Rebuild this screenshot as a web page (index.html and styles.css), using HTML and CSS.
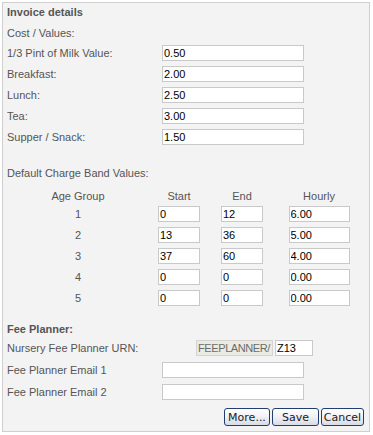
FILE: index.html
```html
<!DOCTYPE html>
<html>
<head>
    <title>Invoice details</title>
    <meta name="viewport" content="width=device-width, initial-scale=1.0">
    <link rel="stylesheet" href="styles.css">
</head>
<body>
    <div class="invoice-panel">
        <div class="invoice-title">Invoice details</div>
        <div class="invoice-section">Cost / Values:</div>

        <div class="invoice-row">
            <label>1/3 Pint of Milk Value:</label>
            <input type="text" class="invoice-input" value="0.50">
        </div>
        <div class="invoice-row">
            <label>Breakfast:</label>
            <input type="text" class="invoice-input" value="2.00">
        </div>
        <div class="invoice-row">
            <label>Lunch:</label>
            <input type="text" class="invoice-input" value="2.50">
        </div>
        <div class="invoice-row">
            <label>Tea:</label>
            <input type="text" class="invoice-input" value="3.00">
        </div>
        <div class="invoice-row">
            <label>Supper / Snack:</label>
            <input type="text" class="invoice-input" value="1.50">
        </div>

        <div class="invoice-section band-title">Default Charge Band Values:</div>

        <div class="band-grid band-head">
            <div>Age Group</div>
            <div>Start</div>
            <div>End</div>
            <div>Hourly</div>
        </div>
        <div class="band-grid band-row">
            <div>1</div>
            <input type="text" class="band-input" value="0">
            <input type="text" class="band-input" value="12">
            <input type="text" class="band-input hourly" value="6.00">
        </div>
        <div class="band-grid band-row">
            <div>2</div>
            <input type="text" class="band-input" value="13">
            <input type="text" class="band-input" value="36">
            <input type="text" class="band-input hourly" value="5.00">
        </div>
        <div class="band-grid band-row">
            <div>3</div>
            <input type="text" class="band-input" value="37">
            <input type="text" class="band-input" value="60">
            <input type="text" class="band-input hourly" value="4.00">
        </div>
        <div class="band-grid band-row">
            <div>4</div>
            <input type="text" class="band-input" value="0">
            <input type="text" class="band-input" value="0">
            <input type="text" class="band-input hourly" value="0.00">
        </div>
        <div class="band-grid band-row">
            <div>5</div>
            <input type="text" class="band-input" value="0">
            <input type="text" class="band-input" value="0">
            <input type="text" class="band-input hourly" value="0.00">
        </div>

        <div class="invoice-title fee-title">Fee Planner:</div>

        <div class="fee-row">
            <label>Nursery Fee Planner URN:</label>
            <input type="text" class="urn-prefix" value="FEEPLANNER/" disabled>
            <input type="text" class="urn-code" value="Z13">
        </div>
        <div class="fee-row">
            <label>Fee Planner Email 1</label>
            <input type="text" class="invoice-input" value="">
        </div>
        <div class="fee-row">
            <label>Fee Planner Email 2</label>
            <input type="text" class="invoice-input" value="">
        </div>

        <div class="invoice-actions">
            <button class="invoice-btn btn-more">More...</button>
            <button class="invoice-btn btn-save">Save</button>
            <button class="invoice-btn btn-cancel">Cancel</button>
        </div>
    </div>
</body>
</html>
```

FILE: styles.css
```css
body {
    margin: 0;
    background-color: white;
    font-family: 'Liberation Sans', Arial, sans-serif;
    font-size: 11px;
    color: #555;
}

.invoice-panel {
    margin: 2px;
    width: 368px;
    background-color: #f3f3f3;
    border: 1px solid #cfcfcf;
    padding: 0 0 5px 4px;
    box-sizing: border-box;
}

.invoice-title {
    font-weight: bold;
    line-height: 19px;
}

.invoice-section {
    margin-top: 1px;
    line-height: 20px;
}

.invoice-row {
    display: flex;
    align-items: flex-start;
    height: 21px;
}

.invoice-row label,
.fee-row label {
    width: 155px;
    flex-shrink: 0;
    line-height: 20px;
}

.fee-row label {
    line-height: 18px;
}

input {
    font-family: 'Liberation Sans', Arial, sans-serif;
    font-size: 11px;
    color: #000;
    background-color: white;
    border: 1px solid #c9c9c9;
    height: 16px;
    padding: 0 1px;
    margin: 0;
    box-sizing: border-box;
    outline: none;
}

.invoice-input {
    width: 142px;
    margin-top: 2px;
}

.band-title {
    margin-top: 15px;
}

.band-grid {
    display: grid;
    grid-template-columns: 142px 60px 66px 88px;
    justify-items: center;
}

.band-head {
    margin-top: 3px;
    line-height: 20px;
}

.band-row {
    height: 21px;
    align-items: start;
    line-height: 16px;
}

.band-input {
    width: 42px;
}

.band-input.hourly {
    width: 61px;
}

.fee-title {
    margin-top: 8px;
    line-height: 20px;
}

.fee-row {
    display: flex;
    align-items: flex-start;
    height: 22px;
}

.fee-row input {
    margin-top: 1px;
}

.urn-prefix {
    margin-left: 34px;
    width: 77px;
    padding: 0 0 0 1px;
    letter-spacing: -0.4px;
    background-color: #ebebe4;
    color: #6b6b6b;
    border-color: #d4d4d0;
}

.urn-code {
    margin-left: 2px;
    width: 38px;
}

.invoice-actions {
    display: flex;
    justify-content: flex-end;
    gap: 2px;
    margin-top: 3px;
    padding-right: 5px;
}

.invoice-btn {
    height: 18px;
    padding: 0;
    font-family: 'DejaVu Sans', Verdana, sans-serif;
    font-size: 11px;
    color: #1a1a1a;
    border: 1px solid #233e6e;
    border-radius: 3px;
    background: linear-gradient(to bottom, #ffffff 0%, #f2f3f7 45%, #d7dbe6 100%);
    cursor: pointer;
}

.btn-more {
    width: 46px;
}

.btn-save {
    width: 47px;
}

.btn-cancel {
    width: 43px;
}
```
